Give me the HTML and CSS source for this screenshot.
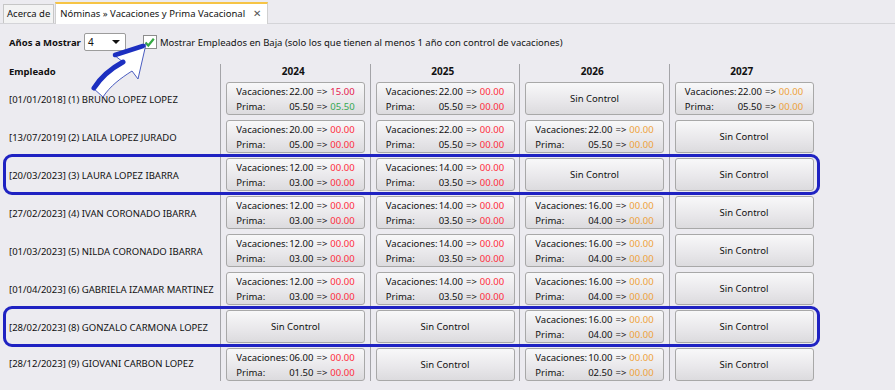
FILE: index.html
```html
<!DOCTYPE html>
<html lang="es">
<head>
<meta charset="utf-8">
<title>Nóminas » Vacaciones y Prima Vacacional</title>
<link rel="stylesheet" href="styles.css">
</head>
<body>
<div class="tabs">
  <div class="tab">Acerca de</div>
  <div class="tab active">Nóminas » Vacaciones y Prima Vacacional <span class="close">✕</span></div>
</div>
<div class="toolbar">
  <span class="lbl">Años a Mostrar</span>
  <div class="combo"><span>4</span><span class="caret"></span></div>
  <label class="check">
    <span class="box"><svg width="11" height="11" viewBox="0 0 11 11"><path d="M1.5 5.5 L4.3 8.5 L9.8 1.8" fill="none" stroke="#35a844" stroke-width="2.2"/></svg></span>
    Mostrar Empleados en Baja (solo los que tienen al menos 1 año con control de vacaciones)
  </label>
</div>

<div class="table">
  <div class="row head">
    <div class="emp">Empleado</div>
    <div class="yr">2024</div><div class="yr">2025</div><div class="yr">2026</div><div class="yr">2027</div>
  </div>

  <div class="row">
    <div class="emp">[01/01/2018] (1) BRUNO LOPEZ LOPEZ</div>
    <div class="cell"><div class="btn"><div class="vals"><span>Vacaciones:</span><span>22.00</span><span>=&gt;</span><span class="crim">15.00</span><span>Prima:</span><span>05.50</span><span>=&gt;</span><span class="grn">05.50</span></div></div></div>
    <div class="cell"><div class="btn"><div class="vals"><span>Vacaciones:</span><span>22.00</span><span>=&gt;</span><span class="red">00.00</span><span>Prima:</span><span>05.50</span><span>=&gt;</span><span class="red">00.00</span></div></div></div>
    <div class="cell"><div class="btn">Sin Control</div></div>
    <div class="cell"><div class="btn"><div class="vals"><span>Vacaciones:</span><span>22.00</span><span>=&gt;</span><span class="org">00.00</span><span>Prima:</span><span>05.50</span><span>=&gt;</span><span class="org">00.00</span></div></div></div>
  </div>

  <div class="row">
    <div class="emp">[13/07/2019] (2) LAILA LOPEZ JURADO</div>
    <div class="cell"><div class="btn"><div class="vals"><span>Vacaciones:</span><span>20.00</span><span>=&gt;</span><span class="red">00.00</span><span>Prima:</span><span>05.00</span><span>=&gt;</span><span class="red">00.00</span></div></div></div>
    <div class="cell"><div class="btn"><div class="vals"><span>Vacaciones:</span><span>22.00</span><span>=&gt;</span><span class="red">00.00</span><span>Prima:</span><span>05.50</span><span>=&gt;</span><span class="red">00.00</span></div></div></div>
    <div class="cell"><div class="btn"><div class="vals"><span>Vacaciones:</span><span>22.00</span><span>=&gt;</span><span class="org">00.00</span><span>Prima:</span><span>05.50</span><span>=&gt;</span><span class="org">00.00</span></div></div></div>
    <div class="cell"><div class="btn">Sin Control</div></div>
  </div>

  <div class="row">
    <div class="mark"></div>
    <div class="emp">[20/03/2023] (3) LAURA LOPEZ IBARRA</div>
    <div class="cell"><div class="btn"><div class="vals"><span>Vacaciones:</span><span>12.00</span><span>=&gt;</span><span class="red">00.00</span><span>Prima:</span><span>03.00</span><span>=&gt;</span><span class="red">00.00</span></div></div></div>
    <div class="cell"><div class="btn"><div class="vals"><span>Vacaciones:</span><span>14.00</span><span>=&gt;</span><span class="red">00.00</span><span>Prima:</span><span>03.50</span><span>=&gt;</span><span class="red">00.00</span></div></div></div>
    <div class="cell"><div class="btn">Sin Control</div></div>
    <div class="cell"><div class="btn">Sin Control</div></div>
  </div>

  <div class="row">
    <div class="emp">[27/02/2023] (4) IVAN CORONADO IBARRA</div>
    <div class="cell"><div class="btn"><div class="vals"><span>Vacaciones:</span><span>12.00</span><span>=&gt;</span><span class="red">00.00</span><span>Prima:</span><span>03.00</span><span>=&gt;</span><span class="red">00.00</span></div></div></div>
    <div class="cell"><div class="btn"><div class="vals"><span>Vacaciones:</span><span>14.00</span><span>=&gt;</span><span class="red">00.00</span><span>Prima:</span><span>03.50</span><span>=&gt;</span><span class="red">00.00</span></div></div></div>
    <div class="cell"><div class="btn"><div class="vals"><span>Vacaciones:</span><span>16.00</span><span>=&gt;</span><span class="org">00.00</span><span>Prima:</span><span>04.00</span><span>=&gt;</span><span class="org">00.00</span></div></div></div>
    <div class="cell"><div class="btn">Sin Control</div></div>
  </div>

  <div class="row">
    <div class="emp">[01/03/2023] (5) NILDA CORONADO IBARRA</div>
    <div class="cell"><div class="btn"><div class="vals"><span>Vacaciones:</span><span>12.00</span><span>=&gt;</span><span class="red">00.00</span><span>Prima:</span><span>03.00</span><span>=&gt;</span><span class="red">00.00</span></div></div></div>
    <div class="cell"><div class="btn"><div class="vals"><span>Vacaciones:</span><span>14.00</span><span>=&gt;</span><span class="red">00.00</span><span>Prima:</span><span>03.50</span><span>=&gt;</span><span class="red">00.00</span></div></div></div>
    <div class="cell"><div class="btn"><div class="vals"><span>Vacaciones:</span><span>16.00</span><span>=&gt;</span><span class="org">00.00</span><span>Prima:</span><span>04.00</span><span>=&gt;</span><span class="org">00.00</span></div></div></div>
    <div class="cell"><div class="btn">Sin Control</div></div>
  </div>

  <div class="row">
    <div class="emp">[01/04/2023] (6) GABRIELA IZAMAR MARTINEZ</div>
    <div class="cell"><div class="btn"><div class="vals"><span>Vacaciones:</span><span>12.00</span><span>=&gt;</span><span class="red">00.00</span><span>Prima:</span><span>03.00</span><span>=&gt;</span><span class="red">00.00</span></div></div></div>
    <div class="cell"><div class="btn"><div class="vals"><span>Vacaciones:</span><span>14.00</span><span>=&gt;</span><span class="red">00.00</span><span>Prima:</span><span>03.50</span><span>=&gt;</span><span class="red">00.00</span></div></div></div>
    <div class="cell"><div class="btn"><div class="vals"><span>Vacaciones:</span><span>16.00</span><span>=&gt;</span><span class="org">00.00</span><span>Prima:</span><span>04.00</span><span>=&gt;</span><span class="org">00.00</span></div></div></div>
    <div class="cell"><div class="btn">Sin Control</div></div>
  </div>

  <div class="row">
    <div class="mark"></div>
    <div class="emp">[28/02/2023] (8) GONZALO CARMONA LOPEZ</div>
    <div class="cell"><div class="btn">Sin Control</div></div>
    <div class="cell"><div class="btn">Sin Control</div></div>
    <div class="cell"><div class="btn"><div class="vals"><span>Vacaciones:</span><span>16.00</span><span>=&gt;</span><span class="org">00.00</span><span>Prima:</span><span>04.00</span><span>=&gt;</span><span class="org">00.00</span></div></div></div>
    <div class="cell"><div class="btn">Sin Control</div></div>
  </div>

  <div class="row last">
    <div class="emp">[28/12/2023] (9) GIOVANI CARBON LOPEZ</div>
    <div class="cell"><div class="btn"><div class="vals"><span>Vacaciones:</span><span>06.00</span><span>=&gt;</span><span class="red">00.00</span><span>Prima:</span><span>01.50</span><span>=&gt;</span><span class="red">00.00</span></div></div></div>
    <div class="cell"><div class="btn">Sin Control</div></div>
    <div class="cell"><div class="btn"><div class="vals"><span>Vacaciones:</span><span>10.00</span><span>=&gt;</span><span class="org">00.00</span><span>Prima:</span><span>02.50</span><span>=&gt;</span><span class="org">00.00</span></div></div></div>
    <div class="cell"><div class="btn">Sin Control</div></div>
  </div>
</div>

<svg class="arrow" width="80" height="70" viewBox="85 35 80 70">
  <path d="M146 44 L138 79 L132 71 C121 78 110 86 103 97 L93 88 C101 77 112 68 123 62 L114 55 Z" fill="#ffffff" stroke="#4a5cc0" stroke-width="1"/>
  <path d="M115 55 L143 46" stroke="#1c2fc0" stroke-width="4.5" fill="none" stroke-linecap="round"/>
  <path d="M123 62 C112 68 101 77 94 88" stroke="#1c2fc0" stroke-width="5" fill="none" stroke-linecap="round"/>
</svg>
</body>
</html>
```

FILE: styles.css
```css
* { box-sizing: border-box; }
body {
  margin: 0;
  width: 895px;
  height: 390px;
  overflow: hidden;
  background: #ecebf0;
  font-family: "Noto Sans", "Open Sans", sans-serif;
  font-size: 9.5px;
  color: #111;
  position: relative;
}
.tabs {
  display: flex;
  align-items: flex-end;
  height: 24px;
  padding-left: 3px;
  border-bottom: 1px solid #d4d4d8;
}
.tab {
  height: 19px;
  padding: 0 3px;
  line-height: 17px;
  background: #f3f3f3;
  border: 1px solid #c6c6c6;
  border-bottom: none;
  white-space: nowrap;
  font-size: 9.5px;
}
.tab.active {
  height: 22px;
  line-height: 19px;
  background: #ffffff;
  border-top: 2px solid #f6c445;
  border-color: #f6c445 #d0d0d0 #d0d0d0 #d0d0d0;
  margin-left: 1px;
  padding: 0 6px 0 4px;
  margin-bottom: -1px;
}
.close { margin-left: 5px; color: #555; font-size: 9.5px; }

.toolbar {
  display: flex;
  align-items: center;
  height: 18px;
  margin-top: 9px;
  padding-left: 9px;
}
.lbl { font-weight: bold; margin-right: 3px; }
.combo {
  width: 42px;
  height: 18px;
  background: #fff;
  border: 1px solid #9c9c9c;
  border-radius: 2px;
  display: flex;
  align-items: center;
  justify-content: space-between;
  padding: 0 5px 0 3px;
  margin-right: 17px;
  font-size: 10px;
}
.caret {
  width: 0; height: 0;
  border-left: 4px solid transparent;
  border-right: 4px solid transparent;
  border-top: 4px solid #111;
}
.check { display: flex; align-items: center; }
.box {
  width: 14px; height: 14px;
  border: 1px solid #8c8c8c;
  background: #fff;
  margin-right: 3px;
  display: flex; align-items: center; justify-content: center;
}

.table { margin-top: 13px; }
.row {
  display: grid;
  grid-template-columns: 220px repeat(4, 149.5px);
  height: 38px;
  position: relative;
}
.row.head { height: 16px; }
.row.last { height: 35px; }
.emp {
  padding-left: 9px;
  display: flex;
  align-items: center;
  white-space: nowrap;
}
.head .emp, .yr { font-weight: bold; }
.head .emp { align-items: flex-start; padding-top: 1px; }
.yr {
  border-left: 1px solid #a4a4a8;
  text-align: center;
  padding-top: 0;
  padding-right: 4px;
  font-size: 10px;
}
.cell {
  border-left: 1px solid #a4a4a8;
  padding: 2px 5px 0 5px;
}
.btn {
  width: 139px;
  height: 33px;
  border: 1px solid #a8a8a8;
  border-radius: 3px;
  background: linear-gradient(#f8f8f9, #e8e7ea 60%, #dcdbde);
  display: flex;
  align-items: center;
  justify-content: center;
  white-space: nowrap;
}
.vals {
  display: grid;
  grid-template-columns: auto auto auto auto;
  column-gap: 3px;
  row-gap: 0;
  line-height: 15px;
}
.vals span:nth-child(4n+1) { margin-right: -2px; }
.vals span:nth-child(4n+2) { text-align: right; }
.red { color: #ff2b3c; }
.crim { color: #e5174d; }
.grn { color: #35a852; }
.org { color: #eea23a; }

.mark {
  position: absolute;
  left: 3px;
  width: 817px;
  top: -2px;
  height: 41px;
  border: 3px solid #1f22c2;
  border-radius: 9px;
  pointer-events: none;
  z-index: 2;
}
.arrow {
  position: absolute;
  left: 85px;
  top: 35px;
  z-index: 3;
}
```
